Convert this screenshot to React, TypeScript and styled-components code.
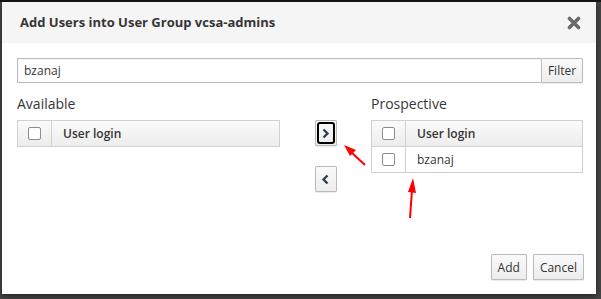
import React from "react";
import styled, { createGlobalStyle } from "styled-components";

const Global = createGlobalStyle`
  html, body { margin: 0; padding: 0; }
  body {
    width: 601px; height: 299px; overflow: hidden;
    background: #3d3d3d;
    font-family: "Open Sans", "Noto Sans", sans-serif;
    font-size: 12px; color: #363636;
  }
`;

const Backdrop = styled.div`
  width: 601px; height: 299px;
  box-sizing: border-box;
  padding: 2px 5px 5px 2px;
  background: linear-gradient(#161616 0, #161616 2px, #454545 2px);
  position: relative;
`;

const Modal = styled.div`
  width: 594px; height: 292px;
  background: #fff;
  display: flex; flex-direction: column;
  box-shadow: 0 2px 6px rgba(0,0,0,0.5);
`;

const Header = styled.div`
  height: 41px; background: #f5f5f5;
  display: flex; align-items: center; justify-content: space-between;
  padding: 0 15px 0 18px;
`;

const Title = styled.h4`
  margin: 0; font-size: 13px; font-weight: 700; color: #363636;
  position: relative; top: -1px;
`;

const Close = styled.button`
  border: 0; background: none; padding: 0; width: 15px; height: 15px;
  display: flex; align-items: center; justify-content: center;
`;

const Body = styled.div`
  padding: 15px 13px 0 15px;
  display: flex; flex-direction: column;
`;

const FilterRow = styled.div`
  display: flex; height: 25px;
`;

const Input = styled.div`
  flex: 1; border: 1px solid #bababa; border-right: 0;
  display: flex; align-items: center; padding-left: 6px;
  font-size: 12px; color: #363636;
  box-shadow: inset 0 1px 1px rgba(0,0,0,0.04);
`;

const Button = styled.button<{ $h?: number }>`
  font-family: inherit; font-size: 12px; color: #363636;
  background: linear-gradient(#fafafa, #ededed);
  border: 1px solid #bbb; border-radius: 1px;
  padding: 0 6px; height: ${p => p.$h || 26}px;
  display: flex; align-items: center; justify-content: center;
  box-shadow: 0 1px 1px rgba(0,0,0,0.08);
`;

const FilterButton = styled(Button)`
  height: 25px; width: 42px; padding: 0;
`;

const Columns = styled.div`
  display: grid; grid-template-columns: 263px 91px 212px;
  margin-top: 11px;
`;

const Col = styled.div`
  display: flex; flex-direction: column;
`;

const ColTitle = styled.div`
  font-size: 14px; font-weight: 400; color: #363636;
  height: 26px; line-height: 19px;
`;

const Table = styled.div`
  border: 1px solid #d1d1d1; border-bottom: 0;
`;

const Row = styled.div<{ $head?: boolean }>`
  display: flex; height: 25px; border-bottom: 1px solid #d1d1d1;
  background: ${p => p.$head ? "linear-gradient(#fafafa, #ededed)" : "#fff"};
  font-weight: ${p => p.$head ? 600 : 400};
`;

const CheckCell = styled.div`
  width: 33px; border-right: 1px solid #d1d1d1;
  display: flex; align-items: center; justify-content: center;
`;

const Cell = styled.div`
  flex: 1; display: flex; align-items: center; padding-left: 11px;
`;

const Box = styled.span`
  width: 11px; height: 11px; border: 1px solid #8b8d8f; border-radius: 2px;
  background: #fff;
`;

const Middle = styled.div`
  display: flex; flex-direction: column; align-items: center;
  padding-top: 26px; gap: 20px;
`;

const ArrowBtn = styled(Button)`
  width: 22px; height: 26px; padding: 0;
`;

const Focus = styled.span`
  width: 14px; height: 18px; border: 2px solid #000; border-radius: 3px;
  display: flex; align-items: center; justify-content: center;
`;

const Footer = styled.div`
  margin-top: auto; display: flex; justify-content: flex-end; gap: 6px;
  padding: 0 12px 14px 0;
`;

const Overlay = styled.svg`
  position: absolute; left: 0; top: 0; pointer-events: none;
`;

const Chevron = ({ dir }: { dir: "l" | "r" }) => (
  <svg width="9" height="11" viewBox="0 0 9 11">
    <path d={dir === "r" ? "M2.5 1.5 L6.5 5.5 L2.5 9.5" : "M6.5 1.5 L2.5 5.5 L6.5 9.5"} fill="none" stroke="#2d3e50" strokeWidth="2.3" />
  </svg>
);

export default function App() {
  return (
    <>
      <Global />
      <Backdrop>
        <Modal>
          <Header>
            <Title>Add Users into User Group vcsa-admins</Title>
            <Close>
              <svg width="14" height="14" viewBox="0 0 14 14">
                <path d="M2.5 2.5 L11.5 11.5 M11.5 2.5 L2.5 11.5" stroke="#6a6a6a" strokeWidth="3.6" strokeLinecap="round" />
              </svg>
            </Close>
          </Header>
          <Body>
            <FilterRow>
              <Input>bzanaj</Input>
              <FilterButton>Filter</FilterButton>
            </FilterRow>
            <Columns>
              <Col>
                <ColTitle>Available</ColTitle>
                <Table>
                  <Row $head><CheckCell><Box /></CheckCell><Cell>User login</Cell></Row>
                </Table>
              </Col>
              <Middle>
                <ArrowBtn><Focus><Chevron dir="r" /></Focus></ArrowBtn>
                <ArrowBtn><Chevron dir="l" /></ArrowBtn>
              </Middle>
              <Col>
                <ColTitle>Prospective</ColTitle>
                <Table>
                  <Row $head><CheckCell><Box /></CheckCell><Cell>User login</Cell></Row>
                  <Row><CheckCell><Box /></CheckCell><Cell>bzanaj</Cell></Row>
                </Table>
              </Col>
            </Columns>
          </Body>
          <Footer>
            <Button $h={26}>Add</Button>
            <Button $h={26}>Cancel</Button>
          </Footer>
        </Modal>
        <Overlay width="601" height="299" viewBox="0 0 601 299">
          <line x1="365" y1="165" x2="351" y2="152" stroke="#f00" strokeWidth="2" />
          <polygon points="344,145 356,150 350,156" fill="#f00" />
          <line x1="410" y1="218" x2="412" y2="190" stroke="#f00" strokeWidth="2" />
          <polygon points="413,178 416,193 408,192" fill="#f00" />
        </Overlay>
      </Backdrop>
    </>
  );
}
